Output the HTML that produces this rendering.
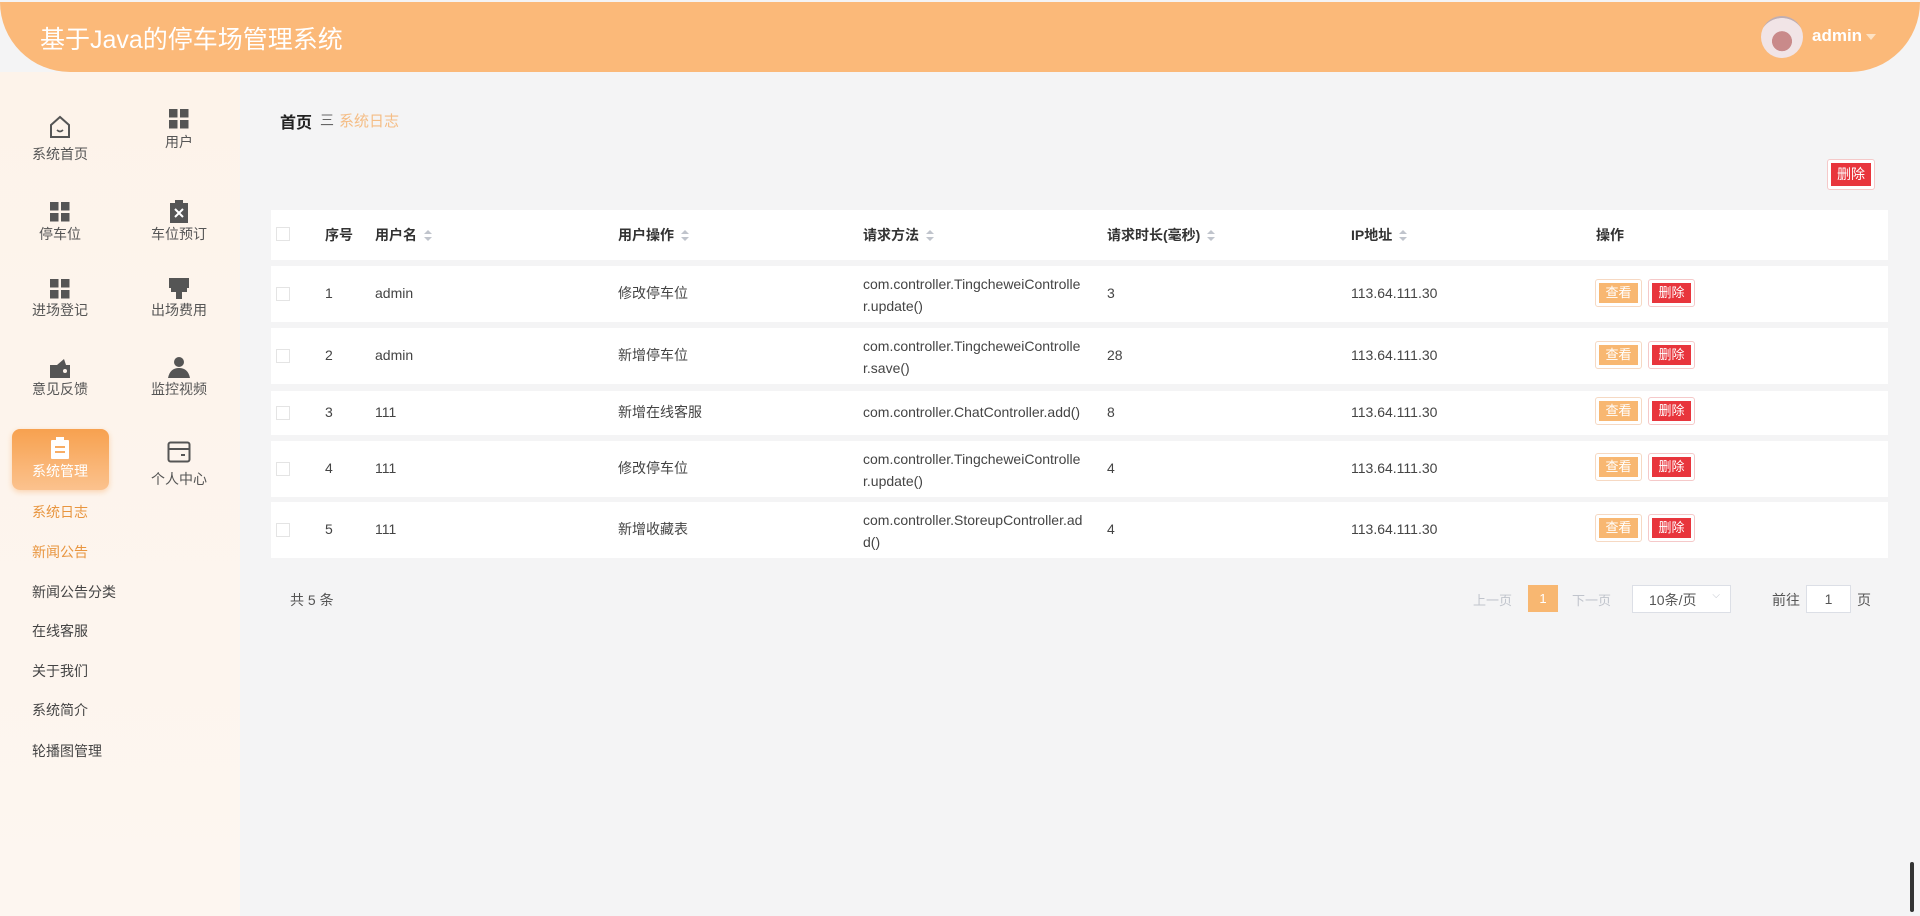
<!DOCTYPE html>
<html><head><meta charset="utf-8"><style>
*{margin:0;padding:0;box-sizing:border-box}
body{width:1920px;height:916px;overflow:hidden;background:#f4f4f5;font-family:"Liberation Sans","Noto Sans CJK SC",sans-serif;position:relative;color:#333}
.abs{position:absolute}
#hdr{left:0;top:2px;width:1920px;height:70px;background:#fbb979;border-radius:0 0 0 70px / 0 0 0 70px}
#hdrR{right:0;top:2px;width:90px;height:70px;background:#f4f4f5}
#hdrR2{right:0;top:2px;width:120px;height:70px;background:#fbb979;border-radius:0 0 70px 0 / 0 0 70px 0}
#title{left:40px;top:20px;color:#fff;font-size:25px}
#side{left:0;top:72px;width:240px;height:844px;background:linear-gradient(#fdf3ea,#fdf6f0)}
.it{position:absolute;width:120px;text-align:center;font-size:14px;color:#555}
.it svg{display:block;margin:0 auto}
.sub{position:absolute;left:32px;font-size:14px;color:#444}
.row{position:absolute;left:271px;width:1617px;background:#fff}
.c{position:absolute;font-size:14px;color:#444}
.z{margin-top:-2px}
.cb{position:absolute;left:276px;width:14px;height:14px;border:1px solid #e4e4e4;background:#fff}
.hd{font-weight:bold;color:#333}
.sort{display:inline-block;margin-left:7px;vertical-align:middle;width:8px;height:12px;position:relative}
.sort:before{content:"";position:absolute;left:0;top:0;border:4px solid transparent;border-bottom:4px solid #c0c4cc;border-top:0}
.sort:after{content:"";position:absolute;left:0;top:7px;border:4px solid transparent;border-top:4px solid #c0c4cc;border-bottom:0}
.btn{position:absolute;width:47px;height:28px;border:1px solid #f6d9c3;border-radius:3px;background:#fff;padding:3px}
.btn span{display:block;height:20px;line-height:20px;text-align:center;color:#fff;font-size:13px}
.v span{background:#f8b771}.d span{background:#e8353c}
.d{border-color:#f5c9c9}
</style></head><body>
<div id="hdr" class="abs"></div>
<div id="hdrR" class="abs"></div>
<div id="hdrR2" class="abs"></div>
<div id="title" class="abs">基于Java的停车场管理系统</div>
<div class="abs" style="left:1761px;top:16px;width:42px;height:42px;border-radius:50%;background:radial-gradient(circle at 50% 60%,#c98a8a 0 30%,#f1e4e6 31% 70%,#bfaeb3 71%)"></div>
<div class="abs" style="left:1812px;top:26px;color:#fff;font-size:17px;font-weight:bold">admin</div>
<div class="abs" style="left:1866px;top:34px;border:5px solid transparent;border-top:6px solid #fde2c4"></div>

<div id="side" class="abs"></div>
<div class="it" style="left:0;top:114px"><svg width="26" height="26" viewBox="0 0 26 26"><path d="M4 11 L13 3 L22 11 V23 H4 Z" fill="none" stroke="#555" stroke-width="2"/><path d="M10 16 q3 3 6 0" fill="none" stroke="#555" stroke-width="1.6"/></svg><div style="margin-top:4px">系统首页</div></div>
<div class="it" style="left:119px;top:108px"><svg width="22" height="22" viewBox="0 0 22 22" fill="#555"><rect x="1" y="1" width="8.5" height="8.5"/><rect x="12" y="1" width="8.5" height="8.5"/><rect x="1" y="12" width="8.5" height="8.5"/><rect x="12" y="12" width="8.5" height="8.5"/></svg><div style="margin-top:2px">用户</div></div>
<div class="it" style="left:0;top:201px"><svg width="22" height="22" viewBox="0 0 22 22" fill="#555"><rect x="1" y="1" width="8.5" height="8.5"/><rect x="12" y="1" width="8.5" height="8.5"/><rect x="1" y="12" width="8.5" height="8.5"/><rect x="12" y="12" width="8.5" height="8.5"/></svg><div style="margin-top:1px">停车位</div></div>
<div class="it" style="left:119px;top:200px"><svg width="20" height="24" viewBox="0 0 20 24"><rect x="1" y="3" width="18" height="20" fill="#555"/><rect x="6" y="0" width="8" height="4" fill="#555"/><path d="M6 9 L14 17 M14 9 L6 17" stroke="#fff" stroke-width="2"/></svg><div style="margin-top:0">车位预订</div></div>
<div class="it" style="left:0;top:278px"><svg width="22" height="22" viewBox="0 0 22 22" fill="#555"><rect x="1" y="1" width="8.5" height="8.5"/><rect x="12" y="1" width="8.5" height="8.5"/><rect x="1" y="12" width="8.5" height="8.5"/><rect x="12" y="12" width="8.5" height="8.5"/></svg><div>进场登记</div></div>
<div class="it" style="left:119px;top:278px"><svg width="22" height="22" viewBox="0 0 22 22" fill="#555"><rect x="1" y="0" width="20" height="10"/><rect x="3" y="10" width="16" height="4"/><rect x="8" y="14" width="6" height="7"/></svg><div>出场费用</div></div>
<div class="it" style="left:0;top:357px"><svg width="22" height="22" viewBox="0 0 22 22" fill="#555"><path d="M1 8 H21 V21 H1 Z"/><path d="M8 8 L15 2 L17 8Z"/><circle cx="16" cy="14" r="2" fill="#fdf4ec"/></svg><div>意见反馈</div></div>
<div class="it" style="left:119px;top:356px"><svg width="22" height="22" viewBox="0 0 22 22" fill="#555"><circle cx="11" cy="6" r="5"/><path d="M0 22 Q2 12 11 12 Q20 12 22 22Z"/></svg><div style="margin-top:1px">监控视频</div></div>
<div class="abs" style="left:12px;top:429px;width:97px;height:61px;border-radius:8px;background:linear-gradient(#f7a14f,#fbc28e);box-shadow:0 2px 6px rgba(247,161,79,.4)"></div>
<div class="it" style="left:0;top:437px;color:#fff"><svg width="20" height="22" viewBox="0 0 20 22"><rect x="1" y="3" width="18" height="19" rx="1" fill="#fff"/><rect x="6" y="0" width="8" height="4" fill="#fff"/><rect x="5" y="9" width="10" height="2" fill="#f8ad64"/><rect x="5" y="14" width="10" height="2" fill="#f8ad64"/></svg><div style="margin-top:2px">系统管理</div></div>
<div class="it" style="left:119px;top:441px"><svg width="24" height="22" viewBox="0 0 24 22"><rect x="1.5" y="1.5" width="21" height="19" rx="2" fill="none" stroke="#555" stroke-width="2"/><path d="M2 8 H22" stroke="#555" stroke-width="2"/><path d="M14 14 H18" stroke="#555" stroke-width="2"/></svg><div style="margin-top:6px">个人中心</div></div>
<div class="sub" style="top:502px;color:#e8953f">系统日志</div>
<div class="sub" style="top:542px;color:#e8953f">新闻公告</div>
<div class="sub" style="top:582px">新闻公告分类</div>
<div class="sub" style="top:621px">在线客服</div>
<div class="sub" style="top:661px">关于我们</div>
<div class="sub" style="top:700px">系统简介</div>
<div class="sub" style="top:741px">轮播图管理</div>

<div class="abs" style="left:280px;top:109px;font-size:16px;font-weight:bold;color:#222">首页</div>
<div class="abs" style="left:320px;top:110px;font-size:14px;color:#666">三</div>
<div class="abs" style="left:339px;top:110px;font-size:15px;color:#f5bd85">系统日志</div>
<div class="btn d" style="left:1827px;top:159px;width:48px;height:31px"><span style="height:23px;line-height:23px;font-size:14px">删除</span></div>

<div class="row" style="top:210px;height:50px"></div>
<div class="row" style="top:266px;height:56px"></div>
<div class="row" style="top:328px;height:56px"></div>
<div class="row" style="top:391px;height:44px"></div>
<div class="row" style="top:441px;height:56px"></div>
<div class="row" style="top:502px;height:56px"></div>

<div class="cb" style="top:227px"></div>
<div class="c hd" style="left:325px;top:225px">序号</div>
<div class="c hd" style="left:375px;top:225px">用户名<i class="sort"></i></div>
<div class="c hd" style="left:618px;top:225px">用户操作<i class="sort"></i></div>
<div class="c hd" style="left:863px;top:225px">请求方法<i class="sort"></i></div>
<div class="c hd" style="left:1107px;top:225px">请求时长(毫秒)<i class="sort"></i></div>
<div class="c hd" style="left:1351px;top:225px">IP地址<i class="sort"></i></div>
<div class="c hd" style="left:1596px;top:225px">操作</div>

<div class="cb" style="top:287px"></div><div class="c" style="left:325px;top:285px">1</div><div class="c" style="left:375px;top:285px">admin</div><div class="c z" style="left:618px;top:285px">修改停车位</div><div class="c" style="left:863px;top:273px;line-height:22px">com.controller.TingcheweiControlle<br>r.update()</div><div class="c" style="left:1107px;top:285px">3</div><div class="c" style="left:1351px;top:285px">113.64.111.30</div>
<div class="btn v" style="left:1595px;top:279px"><span>查看</span></div><div class="btn d" style="left:1648px;top:279px"><span>删除</span></div>

<div class="cb" style="top:349px"></div><div class="c" style="left:325px;top:347px">2</div><div class="c" style="left:375px;top:347px">admin</div><div class="c z" style="left:618px;top:347px">新增停车位</div><div class="c" style="left:863px;top:335px;line-height:22px">com.controller.TingcheweiControlle<br>r.save()</div><div class="c" style="left:1107px;top:347px">28</div><div class="c" style="left:1351px;top:347px">113.64.111.30</div>
<div class="btn v" style="left:1595px;top:341px"><span>查看</span></div><div class="btn d" style="left:1648px;top:341px"><span>删除</span></div>

<div class="cb" style="top:406px"></div><div class="c" style="left:325px;top:404px">3</div><div class="c" style="left:375px;top:404px">111</div><div class="c z" style="left:618px;top:404px">新增在线客服</div><div class="c" style="left:863px;top:404px">com.controller.ChatController.add()</div><div class="c" style="left:1107px;top:404px">8</div><div class="c" style="left:1351px;top:404px">113.64.111.30</div>
<div class="btn v" style="left:1595px;top:397px"><span>查看</span></div><div class="btn d" style="left:1648px;top:397px"><span>删除</span></div>

<div class="cb" style="top:462px"></div><div class="c" style="left:325px;top:460px">4</div><div class="c" style="left:375px;top:460px">111</div><div class="c z" style="left:618px;top:460px">修改停车位</div><div class="c" style="left:863px;top:448px;line-height:22px">com.controller.TingcheweiControlle<br>r.update()</div><div class="c" style="left:1107px;top:460px">4</div><div class="c" style="left:1351px;top:460px">113.64.111.30</div>
<div class="btn v" style="left:1595px;top:453px"><span>查看</span></div><div class="btn d" style="left:1648px;top:453px"><span>删除</span></div>

<div class="cb" style="top:523px"></div><div class="c" style="left:325px;top:521px">5</div><div class="c" style="left:375px;top:521px">111</div><div class="c z" style="left:618px;top:521px">新增收藏表</div><div class="c" style="left:863px;top:509px;line-height:22px">com.controller.StoreupController.ad<br>d()</div><div class="c" style="left:1107px;top:521px">4</div><div class="c" style="left:1351px;top:521px">113.64.111.30</div>
<div class="btn v" style="left:1595px;top:514px"><span>查看</span></div><div class="btn d" style="left:1648px;top:514px"><span>删除</span></div>

<div class="c" style="left:290px;top:590px;color:#555">共 5 条</div>
<div class="c" style="left:1473px;top:590px;color:#c0c4cc;font-size:13px">上一页</div>
<div class="abs" style="left:1528px;top:585px;width:30px;height:27px;background:#f8b771;color:#fff;font-size:13px;text-align:center;line-height:27px">1</div>
<div class="c" style="left:1572px;top:590px;color:#c0c4cc;font-size:13px">下一页</div>
<div class="abs" style="left:1632px;top:585px;width:99px;height:28px;border:1px solid #dcdfe6;background:#fff;font-size:14px;color:#555;padding:4px 0 0 16px">10条/页<span style="position:absolute;right:10px;top:4px;color:#c0c4cc;font-size:10px">⌵</span></div>
<div class="c" style="left:1772px;top:590px;color:#555">前往</div>
<div class="abs" style="left:1806px;top:585px;width:45px;height:28px;border:1px solid #dcdfe6;background:#fff;font-size:14px;text-align:center;line-height:26px;color:#555">1</div>
<div class="c" style="left:1857px;top:590px;color:#555">页</div>

<div class="abs" style="left:1910px;top:862px;width:4px;height:50px;background:#333;border-radius:2px"></div>
</body></html>
